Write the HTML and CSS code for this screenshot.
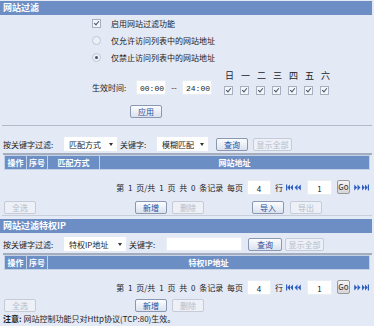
FILE: index.html
```html
<!DOCTYPE html>
<html lang="zh-CN">
<head>
  <meta charset="UTF-8" />
  <title>网站过滤</title>
  <link rel="stylesheet" href="styles.css">
</head>
<body>
  <div class="bar">网站过滤</div>

  <div class="opts">
    <div class="opt"><span class="cb on"></span>启用网站过滤功能</div>
    <div class="opt"><span class="rd"></span>仅允许访问列表中的网站地址</div>
    <div class="opt"><span class="rd on"></span>仅禁止访问列表中的网站地址</div>

    <div class="time">
      <div class="time-left">
        <span class="lbl">生效时间:</span>
        <span class="inp clock">00:00</span>
        <span class="dash">--</span>
        <span class="inp clock">24:00</span>
      </div>
      <div class="days">
        <span>日</span><span>一</span><span>二</span><span>三</span><span>四</span><span>五</span><span>六</span>
        <i class="cb on"></i><i class="cb on"></i><i class="cb on"></i><i class="cb on"></i><i class="cb on"></i><i class="cb on"></i><i class="cb on"></i>
      </div>
    </div>

    <div class="apply"><button class="btn">应用</button></div>
  </div>

  <div class="sep"></div>

  <div class="filter">
    <span class="flbl">按关键字过滤:</span>
    <span class="sel w53">匹配方式<b class="arrow"></b></span>
    <span class="klbl">关键字:</span>
    <span class="sel w51">模糊匹配<b class="arrow"></b></span>
    <button class="btn q1">查询</button>
    <button class="btn dis wide">显示全部</button>
  </div>

  <div class="thick"></div>
  <table class="list">
    <tr>
      <th class="c1">操作</th>
      <th class="c2">序号</th>
      <th class="c3">匹配方式</th>
      <th>网站地址</th>
    </tr>
  </table>

  <div class="pager">
    <span class="ptext">第 1 页/共 1 页 共 0 条记录 每页</span>
    <span class="inp num">4</span>
    <span class="row">行</span>
    <svg class="ico" width="7" height="7" viewBox="0 0 7 7"><rect x="0" y="0.5" width="1.2" height="6" fill="#2f5fbf"/><path d="M4 0.5 L1.2 3.5 L4 6.5Z M7 0.5 L4.2 3.5 L7 6.5Z" fill="#2f5fbf"/></svg>
    <svg class="ico" width="7" height="7" viewBox="0 0 7 7"><path d="M3.5 0.5 L0.5 3.5 L3.5 6.5Z M6.8 0.5 L3.8 3.5 L6.8 6.5Z" fill="#2f5fbf"/></svg>
    <span class="inp num page">1</span>
    <span class="go">Go</span>
    <svg class="ico" width="7" height="7" viewBox="0 0 7 7"><path d="M0.2 0.5 L3.2 3.5 L0.2 6.5Z M3.5 0.5 L6.5 3.5 L3.5 6.5Z" fill="#2f5fbf"/></svg>
    <svg class="ico" width="7" height="7" viewBox="0 0 7 7"><path d="M0 0.5 L2.8 3.5 L0 6.5Z M3 0.5 L5.8 3.5 L3 6.5Z" fill="#2f5fbf"/><rect x="5.8" y="0.5" width="1.2" height="6" fill="#2f5fbf"/></svg>
  </div>

  <div class="actions">
    <button class="btn dis">全选</button>
    <button class="btn add">新增</button>
    <button class="btn dis del">删除</button>
    <button class="btn imp">导入</button>
    <button class="btn dis exp">导出</button>
  </div>

  <div class="sep sep2"></div>

  <div class="bar bar2">网站过滤特权IP</div>

  <div class="filter">
    <span class="flbl">按关键字过滤:</span>
    <span class="sel w62">特权IP地址<b class="arrow"></b></span>
    <span class="klbl">关键字:</span>
    <span class="inp kw"></span>
    <button class="btn q2">查询</button>
    <button class="btn dis wide">显示全部</button>
  </div>

  <div class="thick"></div>
  <table class="list">
    <tr>
      <th class="c1">操作</th>
      <th class="c2">序号</th>
      <th class="c4">特权IP地址</th>
    </tr>
  </table>

  <div class="pager">
    <span class="ptext">第 1 页/共 1 页 共 0 条记录 每页</span>
    <span class="inp num">4</span>
    <span class="row">行</span>
    <svg class="ico" width="7" height="7" viewBox="0 0 7 7"><rect x="0" y="0.5" width="1.2" height="6" fill="#2f5fbf"/><path d="M4 0.5 L1.2 3.5 L4 6.5Z M7 0.5 L4.2 3.5 L7 6.5Z" fill="#2f5fbf"/></svg>
    <svg class="ico" width="7" height="7" viewBox="0 0 7 7"><path d="M3.5 0.5 L0.5 3.5 L3.5 6.5Z M6.8 0.5 L3.8 3.5 L6.8 6.5Z" fill="#2f5fbf"/></svg>
    <span class="inp num page">1</span>
    <span class="go">Go</span>
    <svg class="ico" width="7" height="7" viewBox="0 0 7 7"><path d="M0.2 0.5 L3.2 3.5 L0.2 6.5Z M3.5 0.5 L6.5 3.5 L3.5 6.5Z" fill="#2f5fbf"/></svg>
    <svg class="ico" width="7" height="7" viewBox="0 0 7 7"><path d="M0 0.5 L2.8 3.5 L0 6.5Z M3 0.5 L5.8 3.5 L3 6.5Z" fill="#2f5fbf"/><rect x="5.8" y="0.5" width="1.2" height="6" fill="#2f5fbf"/></svg>
  </div>

  <div class="actions actions2">
    <button class="btn dis">全选</button>
    <button class="btn add">新增</button>
    <button class="btn dis del">删除</button>
  </div>

  <div class="note"><b>注意:</b> 网站控制功能只对Http协议(TCP:80)生效。</div>
</body>
</html>
```

FILE: styles.css
```css
body {
  margin: 0;
  padding-top: 1px;
  width: 374px;
  height: 326px;
  overflow: hidden;
  background-color: #e3e9f5;
  color: #1c1c1c;
  font-family: "Noto Sans CJK SC", "Liberation Sans", sans-serif;
  font-size: 8px;
}

.bar {
  height: 14px;
  line-height: 14px;
  margin-right: 2px;
  padding-left: 3px;
  background-color: #6c8ec5;
  color: white;
  font-size: 9px;
  font-weight: bold;
}

.bar2 {
  margin-top: 3px;
}

/* checkbox / radio look */
.cb, .rd {
  display: inline-block;
  box-sizing: border-box;
  width: 9px;
  height: 9px;
  border: 1px solid #a7b0c0;
  background-color: #f3f5f9;
  position: relative;
}

.cb.on::after {
  content: "";
  position: absolute;
  left: 2px;
  top: 0px;
  width: 2px;
  height: 4px;
  border: solid #4a5568;
  border-width: 0 1px 1px 0;
  transform: rotate(40deg);
}

.rd {
  border-radius: 50%;
  border-color: #c2c8d3;
  background-color: #eceff5;
}

.rd.on::after {
  content: "";
  position: absolute;
  left: 2px;
  top: 2px;
  width: 3px;
  height: 3px;
  border-radius: 50%;
  background-color: #46526a;
}

.opts {
  padding-left: 92px;
}

.opt {
  height: 17px;
  display: flex;
  align-items: center;
}

.opt .cb, .opt .rd {
  margin-right: 10px;
}

.time {
  display: flex;
  align-items: flex-end;
  margin-top: 3px;
}

.time-left {
  display: flex;
  align-items: center;
  height: 15px;
}

.lbl {
  width: 44px;
}

.inp {
  display: inline-block;
  box-sizing: border-box;
  height: 15px;
  line-height: 15px;
  background-color: white;
  border: 1px solid #e9edf4;
}

.clock {
  width: 30px;
  padding-left: 3px;
  font-family: "Liberation Mono", monospace;
  font-size: 8px;
}

.dash {
  width: 16px;
  text-align: center;
}

.days {
  display: grid;
  grid-template-columns: repeat(7, 16px);
  row-gap: 3px;
  margin-left: 12px;
}

.days span {
  height: 14px;
  line-height: 14px;
  padding-left: 1px;
  font-size: 9px;
}

.days .cb {
  display: block;
}

.apply {
  margin-top: 10px;
  padding-left: 38px;
  height: 13px;
}

.btn {
  box-sizing: border-box;
  width: 32px;
  height: 13px;
  padding: 0;
  border: 1px solid #8a98b2;
  border-radius: 2px;
  background: linear-gradient(#fbfcfe, #dbe2ee);
  color: #1f4f9e;
  font-family: inherit;
  font-size: 8px;
  line-height: 11px;
}

.btn.dis {
  border-color: #c5ccd8;
  background: #edf0f6;
  color: #b3bccc;
}

.btn.wide {
  width: 39px;
}

.sep {
  height: 1px;
  margin: 7px 2px 0 2px;
  background-color: #b3bac7;
}

.sep2 {
  margin-top: 1px;
  background-color: #c9cfda;
}

.filter {
  display: flex;
  align-items: center;
  height: 16px;
  margin-top: 10px;
  padding-left: 3px;
}

.bar2 + .filter {
  margin-top: 3px;
}

.flbl {
  width: 61px;
}

.klbl {
  margin-left: 3px;
  width: 37px;
}

.sel {
  display: inline-flex;
  align-items: center;
  justify-content: space-between;
  box-sizing: border-box;
  height: 14px;
  padding: 0 4px 0 5px;
  background-color: white;
}

.w53 { width: 53px; }
.w51 { width: 51px; }
.w62 { width: 62px; }

.arrow {
  width: 0;
  height: 0;
  border-left: 2.5px solid transparent;
  border-right: 2.5px solid transparent;
  border-top: 3px solid #333;
}

.q1 {
  margin-left: 8px;
  margin-right: 5px;
}

.kw {
  width: 76px;
  height: 14px;
}

.q2 {
  width: 34px;
  margin-left: 6px;
  margin-right: 3px;
}

.thick {
  height: 2px;
  margin: 1px 2px 0 3px;
  background-color: #a4adbd;
}

.list {
  border-collapse: collapse;
  width: 366px;
  margin-left: 4px;
}

.list th {
  height: 13px;
  padding: 0;
  border: 1px solid #c5d1e6;
  background-color: #6b8ec5;
  color: white;
  font-size: 8px;
  font-weight: bold;
  line-height: 12px;
}

.list .c1 { width: 21px; }
.list .c2 { width: 20px; }
.list .c3 { width: 51px; }

.pager {
  display: flex;
  align-items: center;
  justify-content: flex-end;
  height: 16px;
  margin-top: 9px;
  padding-right: 4px;
}

.ptext {
  word-spacing: 2px;
}

.num {
  width: 24px;
  margin-left: 4px;
  text-align: center;
}

.row {
  margin: 0 3px 0 4px;
}

.ico {
  margin-right: 1px;
}

.page {
  margin-left: 5px;
  width: 25px;
}

.go {
  box-sizing: border-box;
  width: 13px;
  height: 14px;
  line-height: 12px;
  margin: 0 4px 0 5px;
  border: 1px solid #9a9a9a;
  border-radius: 2px;
  background: linear-gradient(#f4f4f4, #d6d6d6);
  color: #333;
  text-align: center;
  font-size: 8px;
}

.actions {
  display: flex;
  margin-top: 6px;
  padding-left: 4px;
}

.add { margin-left: 99px; }
.del { margin-left: 5px; }
.imp { margin-left: 48px; }
.exp { margin-left: 6px; }

.actions2 {
  margin-top: 4px;
}

.note {
  margin-top: 1px;
  padding-left: 3px;
  height: 12px;
  line-height: 12px;
}
```
